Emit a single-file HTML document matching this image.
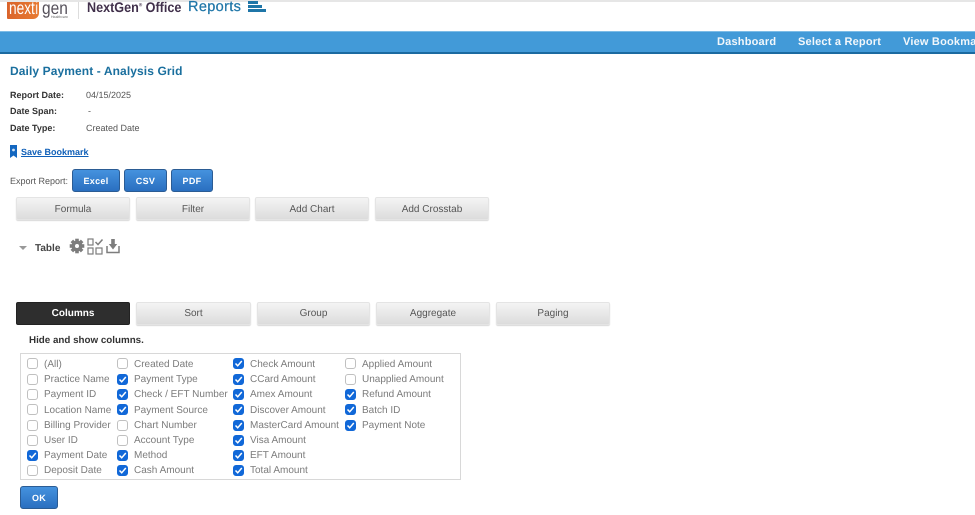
<!DOCTYPE html>
<html><head><meta charset="utf-8"><style>
html,body{margin:0;padding:0;background:#fff;width:975px;height:515px;overflow:hidden}
body{position:relative;font-family:"Liberation Sans",sans-serif;font-size:10px;color:#444;text-rendering:geometricPrecision}
.a{position:absolute;white-space:nowrap}
.b{position:absolute;box-sizing:border-box;text-align:center;white-space:nowrap}
.g{width:114px;height:23px;line-height:23px;font-size:10px;color:#555;background:linear-gradient(#f4f4f4,#dcdcdc);border:1px solid #e4e4e4;border-radius:2px;box-shadow:0 1px 1px #d8d8d8}
.blue{top:169px;height:23px;line-height:22px;font-size:9px;font-weight:bold;color:#fff;letter-spacing:.3px;background:linear-gradient(#4592de,#2a6fc0);border:1px solid #2b5c94;border-radius:3px}
.l{position:absolute;font-size:10px;color:#7b7b7b;white-space:nowrap;line-height:12px}
.c{position:absolute;box-sizing:border-box;width:11px;height:11px;border-radius:3px;border:1px solid #c0c0c0;background:#fff}
.c.k{background:#1168d8;border-color:#1168d8}
.c.k svg{position:absolute;left:0;top:0;width:9px;height:9px}
.lb{font-weight:bold;font-size:9px;color:#333}
.nv{top:35px;color:#f2f7fb;font-weight:bold;font-size:11px;letter-spacing:.2px;line-height:14px}
</style></head><body>
<div class="a" style="left:0;top:0;width:975px;height:2px;background:#e6e6e6"></div>
<div class="a" style="left:7px;top:2px;width:32px;height:17px;background:linear-gradient(100deg,#d9622a,#e87c33);border-radius:0 0 6px 1px"></div>
<div class="a" style="left:9px;top:-2px;font-size:18px;color:#fff;line-height:20px;transform-origin:0 0;transform:scaleX(.76)">next</div>
<div class="a" style="left:35px;top:-2px;font-size:18px;color:#f8e6dc;line-height:20px;transform-origin:0 0;transform:scaleX(.8)">i</div>
<div class="a" style="left:42px;top:-2px;font-size:18px;color:#55505a;line-height:20px;transform-origin:0 0;transform:scaleX(.86)">gen</div>
<div class="a" style="left:51px;top:15px;font-size:3.5px;color:#666;line-height:4px">Healthcare</div>
<div class="a" style="left:78px;top:2px;width:1px;height:17px;background:#ddd"></div>
<div class="a" style="left:87px;top:-1px;font-size:14px;font-weight:bold;color:#41304b;line-height:16px;transform-origin:0 0;transform:scaleX(.9)">NextGen<sup style="font-size:5px;line-height:0">®</sup> Office</div>
<div class="a" style="left:188px;top:-1px;font-size:14.5px;color:#1f76a8;line-height:17px;letter-spacing:.35px;-webkit-text-stroke:.25px #1f76a8">Reports</div>
<svg class="a" style="left:248px;top:0" width="19" height="13"><rect x="0" y="1" width="10" height="3" fill="#1f76a8"/><rect x="0" y="5" width="14" height="3" fill="#1f76a8"/><rect x="0" y="9" width="18" height="3" fill="#1f76a8"/></svg>

<div class="a" style="left:0;top:31px;width:975px;height:23px;box-sizing:border-box;background:#429ad8;border-top:1px solid #7dbce6;border-bottom:2px solid #1b6aa0"></div>
<div class="a nv" style="left:717px">Dashboard</div>
<div class="a nv" style="left:798px">Select a Report</div>
<div class="a nv" style="left:903px">View Bookmarks</div>

<div class="a" style="left:10px;top:64px;font-size:12px;font-weight:bold;color:#1a6f9e;letter-spacing:.1px;line-height:14px">Daily Payment - Analysis Grid</div>
<div class="a lb" style="left:10px;top:90px;line-height:11px">Report Date:</div>
<div class="a" style="left:86px;top:90px;font-size:9px;line-height:11px;color:#555">04/15/2025</div>
<div class="a lb" style="left:10px;top:106px;line-height:11px">Date Span:</div>
<div class="a" style="left:88px;top:106px;font-size:9px;line-height:11px;color:#555">-</div>
<div class="a lb" style="left:10px;top:123px;line-height:11px">Date Type:</div>
<div class="a" style="left:86px;top:123px;font-size:9px;line-height:11px;color:#555">Created Date</div>
<svg class="a" style="left:10px;top:145px" width="7" height="13"><path d="M0 0H7V13L3.5 10.5L0 13Z" fill="#1467c0"/><circle cx="3.5" cy="5" r="1.4" fill="#cfe2f5"/></svg>
<div class="a" style="left:21px;top:146px;font-size:9px;font-weight:bold;color:#0f5fb8;text-decoration:underline;line-height:12px">Save Bookmark</div>

<div class="a" style="left:10px;top:176px;font-size:9px;line-height:11px;color:#555">Export Report:</div>
<div class="b blue" style="left:72px;width:48px">Excel</div>
<div class="b blue" style="left:124px;width:43px">CSV</div>
<div class="b blue" style="left:171px;width:42px">PDF</div>

<div class="b g" style="left:16px;top:197px">Formula</div>
<div class="b g" style="left:136px;top:197px">Filter</div>
<div class="b g" style="left:255px;top:197px">Add Chart</div>
<div class="b g" style="left:375px;top:197px">Add Crosstab</div>

<svg class="a" style="left:19px;top:245px" width="9" height="6"><path d="M0 1H8L4 5Z" fill="#999"/></svg>
<div class="a" style="left:35px;top:242px;font-size:10px;font-weight:bold;color:#444;line-height:13px">Table</div>
<svg class="a" style="left:69px;top:238px" width="16" height="16" viewBox="0 0 16 16"><g fill="#7d7d7d"><circle cx="8" cy="8" r="5.4"/><rect x="6.2" y="0.7" width="3.6" height="14.6"/><rect x="0.7" y="6.2" width="14.6" height="3.6"/><rect x="6.2" y="0.7" width="3.6" height="14.6" transform="rotate(45 8 8)"/><rect x="6.2" y="0.7" width="3.6" height="14.6" transform="rotate(-45 8 8)"/></g><circle cx="8" cy="8" r="2" fill="#fff"/></svg>
<svg class="a" style="left:87px;top:238px" width="17" height="17" viewBox="0 0 17 17"><g fill="none" stroke="#7d7d7d" stroke-width="1.2"><rect x="1" y="1" width="5" height="6"/><rect x="1" y="10" width="5" height="6"/><rect x="9" y="10" width="6" height="6"/><path d="M8.5 4L11 6.5L15.5 1.5" stroke-width="1.5"/></g></svg>
<svg class="a" style="left:106px;top:238px" width="14" height="16" viewBox="0 0 14 16"><path d="M1 8V14.5H13V8" fill="none" stroke="#7d7d7d" stroke-width="1.5"/><path d="M5.2 1H8.8V6H11.2L7 11.5L2.8 6H5.2Z" fill="#7d7d7d"/></svg>

<div class="b" style="left:16px;top:302px;width:114px;height:23px;line-height:22px;background:#2e2e2e;color:#fff;font-weight:bold;font-size:10px;border:1px solid #222;border-radius:2px">Columns</div>
<div class="b g" style="left:136px;top:302px;width:115px;line-height:22px">Sort</div>
<div class="b g" style="left:257px;top:302px;width:113px;line-height:22px">Group</div>
<div class="b g" style="left:376px;top:302px;line-height:22px">Aggregate</div>
<div class="b g" style="left:496px;top:302px;line-height:22px">Paging</div>

<div class="a" style="left:29px;top:335px;font-size:9.8px;font-weight:bold;color:#333;line-height:12px">Hide and show columns.</div>
<div class="a" style="left:20px;top:353px;width:441px;height:127px;box-sizing:border-box;border:1px solid #d8d8d8"></div>

<span class="c" style="left:27px;top:358px"></span><span class="l" style="left:44px;top:359px">(All)</span>
<span class="c" style="left:27px;top:374px"></span><span class="l" style="left:44px;top:374px">Practice Name</span>
<span class="c" style="left:27px;top:389px"></span><span class="l" style="left:44px;top:389px">Payment ID</span>
<span class="c" style="left:27px;top:404px"></span><span class="l" style="left:44px;top:405px">Location Name</span>
<span class="c" style="left:27px;top:420px"></span><span class="l" style="left:44px;top:420px">Billing Provider</span>
<span class="c" style="left:27px;top:435px"></span><span class="l" style="left:44px;top:435px">User ID</span>
<span class="c k" style="left:27px;top:450px"><svg viewBox="0 0 9 9"><path d="M1.5 4.5L3.7 6.8L7.8 2" fill="none" stroke="#fff" stroke-width="1.5"/></svg></span><span class="l" style="left:44px;top:450px">Payment Date</span>
<span class="c" style="left:27px;top:465px"></span><span class="l" style="left:44px;top:465px">Deposit Date</span>

<span class="c" style="left:117px;top:358px"></span><span class="l" style="left:134px;top:359px">Created Date</span>
<span class="c k" style="left:117px;top:374px"><svg viewBox="0 0 9 9"><path d="M1.5 4.5L3.7 6.8L7.8 2" fill="none" stroke="#fff" stroke-width="1.5"/></svg></span><span class="l" style="left:134px;top:374px">Payment Type</span>
<span class="c k" style="left:117px;top:389px"><svg viewBox="0 0 9 9"><path d="M1.5 4.5L3.7 6.8L7.8 2" fill="none" stroke="#fff" stroke-width="1.5"/></svg></span><span class="l" style="left:134px;top:389px">Check / EFT Number</span>
<span class="c k" style="left:117px;top:404px"><svg viewBox="0 0 9 9"><path d="M1.5 4.5L3.7 6.8L7.8 2" fill="none" stroke="#fff" stroke-width="1.5"/></svg></span><span class="l" style="left:134px;top:405px">Payment Source</span>
<span class="c" style="left:117px;top:420px"></span><span class="l" style="left:134px;top:420px">Chart Number</span>
<span class="c" style="left:117px;top:435px"></span><span class="l" style="left:134px;top:435px">Account Type</span>
<span class="c k" style="left:117px;top:450px"><svg viewBox="0 0 9 9"><path d="M1.5 4.5L3.7 6.8L7.8 2" fill="none" stroke="#fff" stroke-width="1.5"/></svg></span><span class="l" style="left:134px;top:450px">Method</span>
<span class="c k" style="left:117px;top:465px"><svg viewBox="0 0 9 9"><path d="M1.5 4.5L3.7 6.8L7.8 2" fill="none" stroke="#fff" stroke-width="1.5"/></svg></span><span class="l" style="left:134px;top:465px">Cash Amount</span>

<span class="c k" style="left:233px;top:358px"><svg viewBox="0 0 9 9"><path d="M1.5 4.5L3.7 6.8L7.8 2" fill="none" stroke="#fff" stroke-width="1.5"/></svg></span><span class="l" style="left:250px;top:359px">Check Amount</span>
<span class="c k" style="left:233px;top:374px"><svg viewBox="0 0 9 9"><path d="M1.5 4.5L3.7 6.8L7.8 2" fill="none" stroke="#fff" stroke-width="1.5"/></svg></span><span class="l" style="left:250px;top:374px">CCard Amount</span>
<span class="c k" style="left:233px;top:389px"><svg viewBox="0 0 9 9"><path d="M1.5 4.5L3.7 6.8L7.8 2" fill="none" stroke="#fff" stroke-width="1.5"/></svg></span><span class="l" style="left:250px;top:389px">Amex Amount</span>
<span class="c k" style="left:233px;top:404px"><svg viewBox="0 0 9 9"><path d="M1.5 4.5L3.7 6.8L7.8 2" fill="none" stroke="#fff" stroke-width="1.5"/></svg></span><span class="l" style="left:250px;top:405px">Discover Amount</span>
<span class="c k" style="left:233px;top:420px"><svg viewBox="0 0 9 9"><path d="M1.5 4.5L3.7 6.8L7.8 2" fill="none" stroke="#fff" stroke-width="1.5"/></svg></span><span class="l" style="left:250px;top:420px">MasterCard Amount</span>
<span class="c k" style="left:233px;top:435px"><svg viewBox="0 0 9 9"><path d="M1.5 4.5L3.7 6.8L7.8 2" fill="none" stroke="#fff" stroke-width="1.5"/></svg></span><span class="l" style="left:250px;top:435px">Visa Amount</span>
<span class="c k" style="left:233px;top:450px"><svg viewBox="0 0 9 9"><path d="M1.5 4.5L3.7 6.8L7.8 2" fill="none" stroke="#fff" stroke-width="1.5"/></svg></span><span class="l" style="left:250px;top:450px">EFT Amount</span>
<span class="c k" style="left:233px;top:465px"><svg viewBox="0 0 9 9"><path d="M1.5 4.5L3.7 6.8L7.8 2" fill="none" stroke="#fff" stroke-width="1.5"/></svg></span><span class="l" style="left:250px;top:465px">Total Amount</span>

<span class="c" style="left:345px;top:358px"></span><span class="l" style="left:362px;top:359px">Applied Amount</span>
<span class="c" style="left:345px;top:374px"></span><span class="l" style="left:362px;top:374px">Unapplied Amount</span>
<span class="c k" style="left:345px;top:389px"><svg viewBox="0 0 9 9"><path d="M1.5 4.5L3.7 6.8L7.8 2" fill="none" stroke="#fff" stroke-width="1.5"/></svg></span><span class="l" style="left:362px;top:389px">Refund Amount</span>
<span class="c k" style="left:345px;top:404px"><svg viewBox="0 0 9 9"><path d="M1.5 4.5L3.7 6.8L7.8 2" fill="none" stroke="#fff" stroke-width="1.5"/></svg></span><span class="l" style="left:362px;top:405px">Batch ID</span>
<span class="c k" style="left:345px;top:420px"><svg viewBox="0 0 9 9"><path d="M1.5 4.5L3.7 6.8L7.8 2" fill="none" stroke="#fff" stroke-width="1.5"/></svg></span><span class="l" style="left:362px;top:420px">Payment Note</span>

<div class="b blue" style="left:20px;top:486px;width:38px">OK</div>
</body></html>
